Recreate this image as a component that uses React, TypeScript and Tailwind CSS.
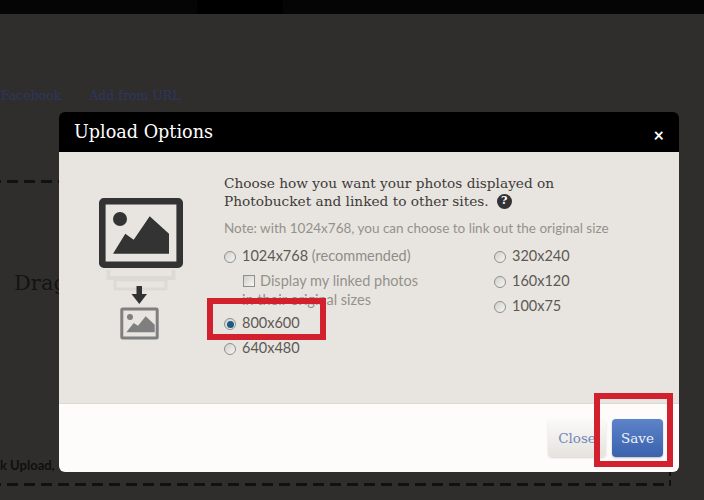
import React from "react";

const UploadIcon = () => (
  <svg viewBox="0 0 84 142" className="w-[84px] h-[142px] shrink-0">
    <rect x="3.3" y="3.3" width="77.4" height="63.4" rx="1.5" fill="none" stroke="#333333" strokeWidth="6.6" />
    <circle cx="21" cy="21" r="7" fill="#333333" />
    <polygon points="14,55.7 26.3,35.7 34.7,41.7 50.7,18.3 70,35.7 70,55.7" fill="#333333" />
    <path d="M9.5 72 V80 H74.5 V72" fill="none" stroke="#dddad5" strokeWidth="4" />
    <rect x="16" y="82" width="51" height="9" fill="none" stroke="#dddad5" strokeWidth="3" />
    <rect x="37.5" y="88" width="5.5" height="9" fill="#333333" />
    <polygon points="32.5,96 48,96 40.3,106" fill="#333333" />
    <rect x="22.8" y="111" width="35.4" height="29" rx="1" fill="none" stroke="#7f7f7f" strokeWidth="3" />
    <circle cx="31" cy="119" r="3" fill="#7f7f7f" />
    <polygon points="27.3,134.3 34.7,125 39,127.7 46.7,118.3 55.7,126.7 55.7,134.3" fill="#7f7f7f" />
  </svg>
);

const Radio = ({ checked }: { checked?: boolean }) => (
  <span className="mt-[2px] w-[12px] h-[12px] rounded-full border border-[#8f8f8c] bg-gradient-to-br from-[#d0cfcc] to-[#f7f7f5] flex items-center justify-center shrink-0">
    {checked && <span className="w-[7px] h-[7px] rounded-full bg-[#1d5b84]" />}
  </span>
);

const Option = ({ label, checked, className }: { label: React.ReactNode; checked?: boolean; className?: string }) => (
  <div className={"flex items-center gap-[6px] " + (className ?? "")}>
    <Radio checked={checked} />
    <span className="text-[#5c5955]">{label}</span>
  </div>
);

export default function App() {
  return (
    <div className="relative w-[704px] h-[500px] overflow-hidden bg-[#2f2e2c] font-['Lato',sans-serif]">
      {/* page behind the overlay */}
      <div className="h-[14px] bg-[#050505] flex">
        <div className="w-[197px]" />
        <div className="w-[86px] bg-black" />
      </div>
      <div className="flex gap-[28px] pl-px mt-[73px] text-[12.5px] leading-[18px] text-[#2e3660] font-['DejaVu_Serif',serif]">
        <span>Facebook</span>
        <span>Add from URL</span>
      </div>
      <div className="ml-[-10px] mt-[75px] w-[681px] h-[306px] border-r-2 border-dashed border-[#0f0f0f] flex flex-col">
        <div className="h-[3px] bg-[repeating-linear-gradient(90deg,#111111_0_11px,transparent_11px_17px)]" />
        <p className="ml-[24px] mt-[85px] text-[21px] leading-[30px] text-[#131313] font-['DejaVu_Serif',serif]">Drag</p>
        <p className="mt-[159px] ml-[10px] text-[13px] leading-[16px] font-bold text-[#0f0f0f]">k Upload,</p>
        <div className="mt-auto h-[3px] bg-[repeating-linear-gradient(90deg,#111111_0_11px,transparent_11px_17px)]" />
      </div>

      {/* modal */}
      <div className="absolute left-[59px] top-[112px] w-[620px] h-[360px] rounded-[6px] overflow-hidden flex flex-col">
        <div className="h-[40px] bg-black flex items-center justify-between pl-[15px] pr-[15px] text-white">
          <span className="text-[17.6px] font-['DejaVu_Serif',serif]">Upload Options</span>
          <span className="text-[18px] font-bold leading-none mt-[5px]">×</span>
        </div>
        <div className="h-[251px] bg-[#e8e5e0] flex pl-[40px] pt-[46px] gap-[41px]">
          <UploadIcon />
          <div className="mt-[-24px] w-[400px] text-[14.5px] leading-[20px]">
            <p className="text-[13.7px] leading-[18px] text-[#3d3b38] font-['DejaVu_Serif',serif]">
              Choose how you want your photos displayed on
              <br />
              <span className="inline-flex items-center gap-[8px]">
                Photobucket and linked to other sites.
                <span className="w-[15px] h-[15px] rounded-full bg-[#333333] text-white text-[11px] font-bold flex items-center justify-center">?</span>
              </span>
            </p>
            <p className="mt-[10px] text-[13.5px] leading-[16px] text-[#94918c]">Note: with 1024x768, you can choose to link out the original size</p>
            <div className="mt-[10px] flex">
              <div className="w-[270px]">
                <Option
                  label={
                    <>
                      1024x768 <span className="text-[#8f8c87]">(recommended)</span>
                    </>
                  }
                />
                <div className="ml-[19px] mt-[5px] flex items-center gap-[5px] text-[#94918c]">
                  <span className="w-[12px] h-[12px] border border-[#8f8f8c] bg-gradient-to-br from-[#d0cfcc] to-[#f7f7f5]" />
                  Display my linked photos
                </div>
                <p className="ml-[18px] mt-[-1px] text-[#94918c]">in their original sizes</p>
                <Option label="800x600" checked className="mt-[3px]" />
                <Option label="640x480" className="mt-[5px]" />
              </div>
              <div className="flex flex-col gap-[5px]">
                <Option label="320x240" />
                <Option label="160x120" />
                <Option label="100x75" />
              </div>
            </div>
          </div>
        </div>
        <div className="flex-1 bg-[#fdfcfa] border-t border-[#dcdad6] flex justify-end items-start pt-[15px] pr-[16px] gap-[6px] font-['DejaVu_Serif',serif] text-[13.5px]">
          <button className="w-[58px] h-[38px] rounded-[4px] bg-gradient-to-b from-[#fbfaf8] to-[#e6e3de] text-[#6f86b8] shadow-[0_1px_2px_rgba(0,0,0,0.15)]">Close</button>
          <button className="w-[51px] h-[38px] rounded-[4px] bg-gradient-to-b from-[#5d84c8] to-[#3a62ae] text-[#eef2f8] shadow-[0_1px_2px_rgba(0,0,0,0.25)]">Save</button>
        </div>
      </div>

      {/* red annotations */}
      <div className="absolute left-[207px] top-[298px] w-[119px] h-[42px] border-[6px] border-[#d2202e]" />
      <div className="absolute left-[594px] top-[393px] w-[79px] h-[74px] border-[6px] border-[#d2202e]" />
    </div>
  );
}
